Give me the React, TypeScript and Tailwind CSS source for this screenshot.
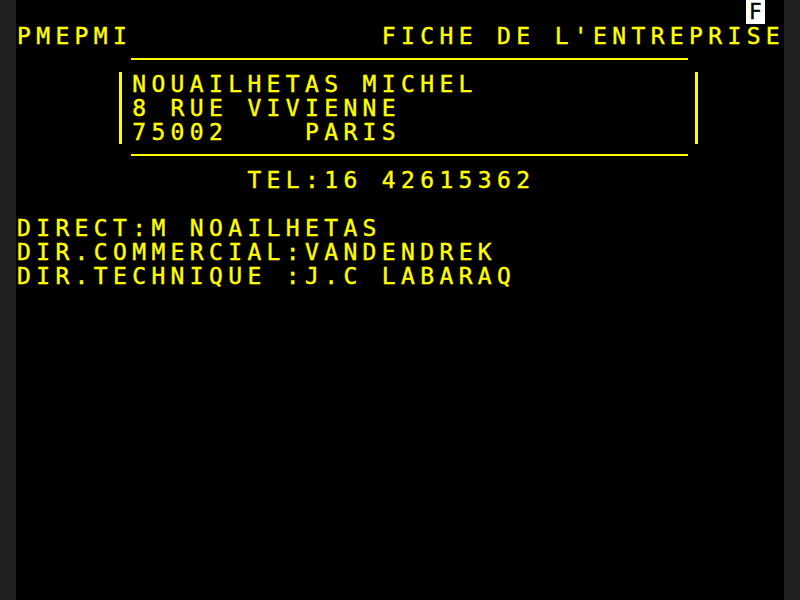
import React from "react";

const font = {
  fontFamily: '"DejaVu Sans Mono", "Liberation Mono", monospace',
};

function Row({ children, indent = "" }: { children?: React.ReactNode; indent?: string }) {
  return (
    <div
      className={`h-6 whitespace-pre pl-[1px] text-[23px] leading-6 tracking-[5.354px] text-[#ffff00] [-webkit-text-stroke:0.4px_#ffff00] ${indent}`}
    >
      {children}
    </div>
  );
}

export default function App() {
  return (
    <div className="flex h-[600px] w-[800px] bg-black" style={font}>
      <div className="h-full w-4 bg-[#212121]" />
      <div className="flex h-full w-[768px] flex-col">
        {/* row 0: status line */}
        <div className="flex h-6 justify-end pr-[19.2px]">
          <div className="flex h-6 w-[19.2px] items-center justify-center bg-white text-[21px] leading-5 text-black [-webkit-text-stroke:0.4px_#000]">
            F
          </div>
        </div>
        {/* row 1 */}
        <Row>{"PMEPMI             FICHE DE L'ENTREPRISE"}</Row>
        {/* row 2: top line */}
        <div className="h-6 pl-[115.2px] pt-[10px]">
          <div className="h-[2px] w-[556.8px] bg-[#ffff00]" />
        </div>
        {/* rows 3-5: boxed address */}
        <div className="flex h-[72px]">
          <div className="w-[103px]" />
          <div className="h-full w-[3px] bg-[#ffff00]" />
          <div className="w-[9.2px]" />
          <div className="flex w-[563.8px] flex-col">
            <Row>NOUAILHETAS MICHEL</Row>
            <Row>8 RUE VIVIENNE</Row>
            <Row>{"75002    PARIS"}</Row>
          </div>
          <div className="h-full w-[3px] bg-[#ffff00]" />
        </div>
        {/* row 6: bottom line */}
        <div className="h-6 pl-[115.2px] pt-[10px]">
          <div className="h-[2px] w-[556.8px] bg-[#ffff00]" />
        </div>
        {/* row 7 */}
        <Row indent="ml-[230.4px]">TEL:16 42615362</Row>
        {/* row 8 */}
        <Row />
        {/* rows 9-11 */}
        <Row>DIRECT:M NOAILHETAS</Row>
        <Row>DIR.COMMERCIAL:VANDENDREK</Row>
        <Row>DIR.TECHNIQUE :J.C LABARAQ</Row>
      </div>
      <div className="h-full w-4 bg-[#212121]" />
    </div>
  );
}
